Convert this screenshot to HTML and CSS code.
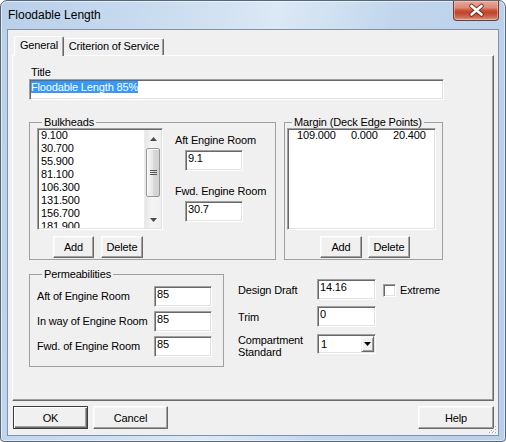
FILE: index.html
```html
<!DOCTYPE html>
<html>
<head>
<meta charset="utf-8">
<title>Floodable Length</title>
<link rel="stylesheet" href="styles.css">
</head>
<body>
<div class="window">
  <div class="titlebar">
    <span class="title">Floodable Length</span>
    <div class="close">
      <svg width="46" height="20" viewBox="0 0 46 20">
        <path d="M18.5 6 L28.5 14.5 M28.5 6 L18.5 14.5" stroke="#5a1c14" stroke-width="4.6" stroke-linecap="round" opacity="0.75"/>
        <path d="M18.5 6 L28.5 14.5 M28.5 6 L18.5 14.5" stroke="#ffffff" stroke-width="2.6" stroke-linecap="round"/>
      </svg>
    </div>
  </div>
  <div class="client">
    <div class="tabs">
      <div class="tab-row">
        <div class="tab active">General</div>
        <div class="tab inactive">Criterion of Service</div>
      </div>
      <div class="panel">
        <div class="lbl title-lbl">Title</div>
        <div class="textbox title-box"><span class="sel">Floodable Length 85%</span></div>

        <div class="groups-row">
          <fieldset class="group bulkheads">
            <legend>Bulkheads</legend>
            <div class="bh-body">
              <div class="bh-left">
                <div class="listbox bh-list">
                  <div class="items">
                    <div>9.100</div>
                    <div>30.700</div>
                    <div>55.900</div>
                    <div>81.100</div>
                    <div>106.300</div>
                    <div>131.500</div>
                    <div>156.700</div>
                    <div>181.900</div>
                  </div>
                  <div class="vscroll">
                    <div class="sb-arrow">
                      <svg width="7" height="4" viewBox="0 0 7 4"><path d="M0 4 L3.5 0 L7 4 Z" fill="#4a4a4a"/></svg>
                    </div>
                    <div class="thumb"><span class="grip-lines"></span></div>
                    <div class="sb-fill"></div>
                    <div class="sb-arrow">
                      <svg width="7" height="4" viewBox="0 0 7 4"><path d="M0 0 L3.5 4 L7 0 Z" fill="#4a4a4a"/></svg>
                    </div>
                  </div>
                </div>
                <div class="btn-row bh-btns">
                  <div class="btn w41">Add</div>
                  <div class="btn w42">Delete</div>
                </div>
              </div>
              <div class="bh-right">
                <div class="lbl er-lbl">Aft Engine Room</div>
                <div class="textbox er-box">9.1</div>
                <div class="lbl er-lbl second">Fwd. Engine Room</div>
                <div class="textbox er-box">30.7</div>
              </div>
            </div>
          </fieldset>

          <fieldset class="group margin">
            <legend>Margin (Deck Edge Points)</legend>
            <div class="listbox mg-list">
              <div class="mg-row">
                <span>109.000</span><span>0.000</span><span>20.400</span>
              </div>
            </div>
            <div class="btn-row mg-btns">
              <div class="btn w42">Add</div>
              <div class="btn w42">Delete</div>
            </div>
          </fieldset>
        </div>

        <div class="lower-row">
          <fieldset class="group perm">
            <legend>Permeabilities</legend>
            <div class="perm-grid">
              <div class="lbl">Aft of Engine Room</div>
              <div class="textbox">85</div>
              <div class="lbl">In way of Engine Room</div>
              <div class="textbox">85</div>
              <div class="lbl">Fwd. of Engine Room</div>
              <div class="textbox">85</div>
            </div>
          </fieldset>

          <div class="draft-grid">
            <div class="lbl dlbl">Design Draft</div>
            <div class="textbox">14.16</div>
            <div class="check-cell">
              <span class="checkbox"></span>
              <span class="lbl">Extreme</span>
            </div>
            <div class="lbl dlbl">Trim</div>
            <div class="textbox">0</div>
            <div></div>
            <div class="lbl comp-lbl">Compartment<br>Standard</div>
            <div class="combo">
              <span class="combo-val">1</span>
              <span class="combo-btn">
                <svg width="7" height="4" viewBox="0 0 7 4"><path d="M0 0 L3.5 4 L7 0 Z" fill="#000"/></svg>
              </span>
            </div>
          </div>
        </div>
      </div>
    </div>

    <div class="footer">
      <div class="btn big default">OK</div>
      <div class="btn big">Cancel</div>
      <div class="btn big help">Help</div>
    </div>

    <svg class="grip" width="12" height="12" viewBox="0 0 12 12">
      <g fill="#ffffff">
        <rect x="10" y="3" width="1" height="1"/><rect x="8" y="5" width="1" height="1"/><rect x="6" y="7" width="1" height="1"/><rect x="4" y="9" width="1" height="1"/>
        <rect x="10" y="6" width="1" height="1"/><rect x="8" y="8" width="1" height="1"/><rect x="7" y="9" width="1" height="1"/>
        <rect x="10" y="9" width="1" height="1"/>
      </g>
      <g fill="#a0a7b0">
        <rect x="9" y="3" width="1" height="1"/><rect x="7" y="5" width="1" height="1"/><rect x="5" y="7" width="1" height="1"/><rect x="3" y="9" width="1" height="1"/>
        <rect x="9" y="6" width="1" height="1"/><rect x="7" y="8" width="1" height="1"/><rect x="6" y="9" width="1" height="1"/>
        <rect x="9" y="9" width="1" height="1"/>
      </g>
    </svg>
  </div>
</div>
</body>
</html>
```

FILE: styles.css
```css
* { box-sizing: border-box; }

html, body {
  margin: 0;
  padding: 0;
  background: #ffffff;
}

body {
  font-family: "Liberation Sans", Arial, sans-serif;
  font-size: 11px;
  color: #000;
  letter-spacing: -0.15px;
}

/* ---------- window frame ---------- */
.window {
  width: 506px;
  height: 442px;
  border: 1px solid #56677c;
  border-radius: 7px 7px 4px 4px;
  background: linear-gradient(100deg, #b9d0ea 0%, #c6d9ee 22%, #dbe8f5 48%, #d2e2f2 56%, #c1d6ed 68%, #b8cfe9 100%);
  box-shadow: inset 0 0 0 1px rgba(255, 255, 255, 0.55);
  padding: 0 6px 5px 6px;
  display: flex;
  flex-direction: column;
}

.titlebar {
  height: 28px;
  display: flex;
  align-items: flex-start;
  padding-left: 1px;
}

.title {
  font-size: 12px;
  letter-spacing: 0;
  line-height: 28px;
}

.close {
  margin-left: auto;
  width: 46px;
  height: 20px;
  border: 1px solid #7b372b;
  border-top: none;
  border-radius: 0 0 4px 4px;
  background: linear-gradient(#e7a898 0%, #dc8b78 35%, #c9523d 50%, #c2432d 62%, #cf6a52 85%, #e09a82 100%);
  box-shadow: inset 0 0 0 1px rgba(255, 220, 210, 0.45);
}

.close svg { display: block; margin: -1px 0 0 -1px; }

.client {
  position: relative;
  height: 407px;
  border: 1px solid #7f92aa;
  background: #f0f0f0;
  display: flex;
  flex-direction: column;
}

/* ---------- tabs ---------- */
.tabs {
  margin: 6px 0 0 4px;
  width: 482px;
}

.tab-row {
  display: flex;
  align-items: flex-end;
  height: 19px;
  padding-left: 2px;
}

.tab {
  border-top: 1px solid #ffffff;
  border-left: 1px solid #ffffff;
  border-right: 1px solid #696969;
  border-radius: 2px 2px 0 0;
  box-shadow: inset -1px 0 #a0a0a0;
  background: #f0f0f0;
  line-height: 13px;
  text-align: center;
  white-space: nowrap;
}

.tab.active {
  position: relative;
  z-index: 1;
  width: 50px;
  height: 20px;
  margin-bottom: -1px;
  padding-top: 2px;
}

.tab.inactive {
  width: 100px;
  height: 17px;
  padding-top: 1px;
  border-left-color: #f0f0f0;
}

.panel {
  height: 346px;
  border-top: 1px solid #ffffff;
  border-left: 1px solid #ffffff;
  border-right: 1px solid #696969;
  border-bottom: 1px solid #696969;
  box-shadow: inset -1px -1px #a0a0a0;
  padding: 10px 0 0 16px;
}

/* ---------- generic controls ---------- */
.lbl {
  line-height: 13px;
  white-space: nowrap;
}

.textbox {
  height: 21px;
  background: #ffffff;
  border-top: 1px solid #a0a0a0;
  border-left: 1px solid #a0a0a0;
  border-right: 1px solid #ffffff;
  border-bottom: 1px solid #ffffff;
  box-shadow: inset 1px 1px #696969, inset -1px -1px #e3e3e3;
  padding: 1px 2px 0 2px;
  line-height: 13px;
  white-space: nowrap;
  overflow: hidden;
}

.btn {
  height: 22px;
  display: flex;
  align-items: center;
  justify-content: center;
  background: #f0f0f0;
  border-top: 1px solid #ffffff;
  border-left: 1px solid #ffffff;
  border-right: 1px solid #696969;
  border-bottom: 1px solid #696969;
  box-shadow: inset -1px -1px #a0a0a0, inset 1px 1px #f8f8f8;
  white-space: nowrap;
}

.w41 { width: 41px; }
.w42 { width: 42px; }

.btn-row {
  display: flex;
  margin-top: 6px;
}

.listbox {
  height: 102px;
  background: #ffffff;
  border-top: 1px solid #a0a0a0;
  border-left: 1px solid #a0a0a0;
  border-right: 1px solid #ffffff;
  border-bottom: 1px solid #ffffff;
  box-shadow: inset 1px 1px #696969, inset -1px -1px #e3e3e3;
  padding: 1px;
}

/* ---------- title ---------- */
.title-lbl { padding-left: 2px; }

.title-box {
  width: 415px;
  padding-left: 1px;
}

.sel {
  background: #3399ff;
  color: #ffffff;
}

/* ---------- group boxes ---------- */
.groups-row {
  display: flex;
  margin-top: 16px;
  gap: 8px;
}

.group {
  margin: 0;
  min-width: 0;
  border: 1px solid #a0a0a0;
  padding: 0;
}

.group legend {
  margin-left: 5px;
  padding: 0 2px;
  line-height: 13px;
}

.bulkheads {
  width: 247px;
  padding: 0 0 1px 7px;
}

.bh-body { display: flex; }

.bh-left { width: 126px; }

.bh-list {
  display: flex;
  margin-top: -1px;
  overflow: hidden;
}

.items {
  flex: 1;
  overflow: hidden;
  padding-left: 2px;
  margin-top: -1px;
  line-height: 13px;
}

.vscroll {
  width: 17px;
  display: flex;
  flex-direction: column;
  background: linear-gradient(to right, #e6e6e6, #f4f4f4 40%, #f0f0f0);
  border-left: 1px solid #ececec;
}

.sb-arrow {
  height: 17px;
  display: flex;
  align-items: center;
  justify-content: center;
}

.sb-arrow svg { display: block; }

.thumb {
  height: 49px;
  margin: 1px 1px 0 1px;
  border: 1px solid #989898;
  border-radius: 2px;
  background: linear-gradient(to right, #f4f4f4, #e8e8e8 45%, #d9d9d9 55%, #d0d0d0);
  box-shadow: inset 1px 1px #fbfbfb;
  display: flex;
  align-items: center;
  justify-content: center;
}

.grip-lines {
  width: 7px;
  height: 5px;
  background: repeating-linear-gradient(#555 0 1px, transparent 1px 2px);
}

.sb-fill { flex: 1; }

.bh-btns {
  padding-left: 16px;
  gap: 7px;
}

.bh-right {
  margin-left: 12px;
  padding-top: 5px;
}

.er-box {
  width: 58px;
  margin: 3px 0 0 10px;
}

.er-lbl.second { margin-top: 14px; }

.margin {
  width: 159px;
  padding: 0 0 1px 2px;
}

.mg-list {
  width: 149px;
  margin-top: -1px;
}

.mg-row {
  display: grid;
  grid-template-columns: 54px 42px auto;
  padding-left: 8px;
  margin-top: -1px;
  line-height: 13px;
}

.mg-btns {
  padding-left: 33px;
  gap: 6px;
}

/* ---------- lower section ---------- */
.lower-row {
  display: flex;
  align-items: flex-start;
  margin-top: 8px;
}

.perm {
  width: 195px;
  padding: 5px 0 9px 7px;
}

.perm-grid {
  display: grid;
  grid-template-columns: 117px 58px;
  grid-auto-rows: 21px;
  row-gap: 4px;
  align-items: center;
}

.draft-grid {
  margin: 11px 0 0 14px;
  display: grid;
  grid-template-columns: 79px 59px auto;
  grid-template-rows: 21px 21px 21px;
  row-gap: 6px;
}

.dlbl {
  align-self: center;
  padding-top: 2px;
}

.comp-lbl {
  line-height: 11.6px;
  margin-top: 2px;
}

.check-cell {
  display: flex;
  align-items: center;
  margin-left: 7px;
  padding-top: 2px;
  gap: 4px;
}

.checkbox {
  width: 13px;
  height: 13px;
  background: #ffffff;
  border-top: 1px solid #a0a0a0;
  border-left: 1px solid #a0a0a0;
  border-right: 1px solid #ffffff;
  border-bottom: 1px solid #ffffff;
  box-shadow: inset 1px 1px #696969, inset -1px -1px #e3e3e3;
}

.combo {
  align-self: end;
  height: 20px;
  display: flex;
  align-items: center;
  background: #ffffff;
  border-top: 1px solid #a0a0a0;
  border-left: 1px solid #a0a0a0;
  border-right: 1px solid #ffffff;
  border-bottom: 1px solid #ffffff;
  box-shadow: inset 1px 1px #696969, inset -1px -1px #e3e3e3;
  padding: 1px;
}

.combo-val {
  padding-left: 2px;
  line-height: 13px;
}

.combo-btn {
  margin-left: auto;
  width: 13px;
  height: 16px;
  display: flex;
  align-items: center;
  justify-content: center;
  background: #f0f0f0;
  border-top: 1px solid #f0f0f0;
  border-left: 1px solid #f0f0f0;
  border-right: 1px solid #696969;
  border-bottom: 1px solid #696969;
  box-shadow: inset 1px 1px #ffffff, inset -1px -1px #a0a0a0;
}

.combo-btn svg { display: block; }

/* ---------- footer ---------- */
.footer {
  display: flex;
  margin-top: 5px;
  padding: 0 4px 0 5px;
  gap: 5px;
}

.btn.big {
  width: 75px;
  height: 23px;
}

.btn.default {
  border: 1px solid #3c3c3c;
  box-shadow: inset 1px 1px #ffffff, inset -1px -1px #696969, inset -2px -2px #a0a0a0;
}

.btn.help {
  width: 76px;
  margin-left: auto;
}

.grip {
  position: absolute;
  right: 0;
  bottom: 0;
}
```
